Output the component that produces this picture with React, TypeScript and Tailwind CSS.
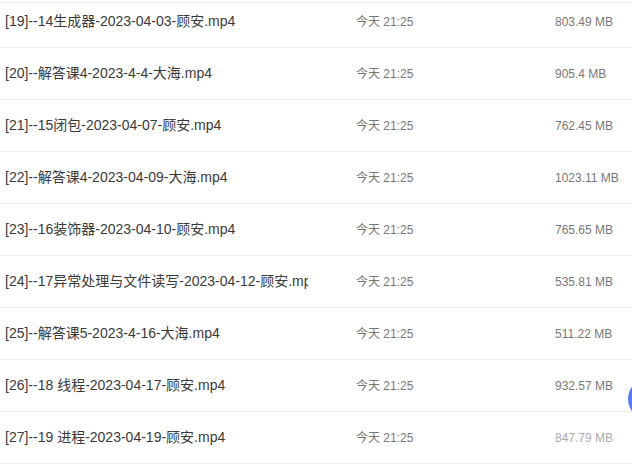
import React from "react";

const files = [
  { name: "[19]--14生成器-2023-04-03-顾安.mp4", time: "今天 21:25", size: "803.49 MB" },
  { name: "[20]--解答课4-2023-4-4-大海.mp4", time: "今天 21:25", size: "905.4 MB" },
  { name: "[21]--15闭包-2023-04-07-顾安.mp4", time: "今天 21:25", size: "762.45 MB" },
  { name: "[22]--解答课4-2023-04-09-大海.mp4", time: "今天 21:25", size: "1023.11 MB" },
  { name: "[23]--16装饰器-2023-04-10-顾安.mp4", time: "今天 21:25", size: "765.65 MB" },
  { name: "[24]--17异常处理与文件读写-2023-04-12-顾安.mp4", time: "今天 21:25", size: "535.81 MB" },
  { name: "[25]--解答课5-2023-4-16-大海.mp4", time: "今天 21:25", size: "511.22 MB" },
  { name: "[26]--18 线程-2023-04-17-顾安.mp4", time: "今天 21:25", size: "932.57 MB" },
  { name: "[27]--19 进程-2023-04-19-顾安.mp4", time: "今天 21:25", size: "847.79 MB" },
];

export default function App() {
  return (
    <div
      className="relative h-[467px] w-[632px] overflow-hidden bg-white"
      style={{ fontFamily: '"Liberation Sans", "Noto Sans CJK SC", sans-serif' }}
    >
      {/* top edge line of the scrolled list */}
      <div className="absolute left-0 right-0 top-[2px] h-px bg-[#f0f0f0]" />

      <div className="-mt-[4px]">
        {files.map((f, i) => (
          <div
            key={i}
            className="flex h-[52px] items-center border-b border-[#efefef]"
          >
            <div className="w-[308px] shrink-0 overflow-hidden whitespace-nowrap pl-[5px] text-[14px] text-[#3a3a3a]">
              {f.name}
            </div>
            <div className="w-[247px] shrink-0 pl-[48px] text-[12px] text-[#777]">
              {f.time}
            </div>
            <div
              className={
                i === files.length - 1
                  ? "text-[12px] text-[#aaa]"
                  : "text-[12px] text-[#777]"
              }
            >
              {f.size}
            </div>
          </div>
        ))}
      </div>

      {/* floating action button peeking from the right edge */}
      <div className="absolute left-[628px] top-[378px] h-[42px] w-[42px] rounded-full bg-gradient-to-br from-[#4f7cf7] to-[#6a6cf0]" />
    </div>
  );
}
